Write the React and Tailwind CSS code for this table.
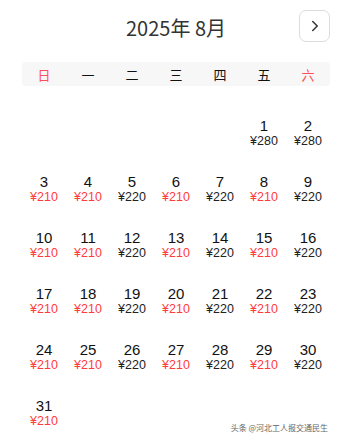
import { ChevronRight } from "lucide-react";

const weekDays = ["日", "一", "二", "三", "四", "五", "六"];

// price for each day of August 2025; red ones are discounted
const prices = {
  1: 280, 2: 280,
};
const redDays = [3, 4, 6, 8, 10, 11, 13, 15, 17, 18, 20, 22, 24, 25, 27, 29, 31];

function priceOf(day) {
  if (prices[day]) return prices[day];
  return redDays.includes(day) ? 210 : 220;
}

export default function App() {
  const cells = [];
  for (let i = 0; i < 5; i++) cells.push(null);
  for (let d = 1; d <= 31; d++) cells.push(d);

  return (
    <div
      className="w-[346px] h-[439px] bg-white pl-[22px] pr-[16px] pt-[10px] relative overflow-hidden"
      style={{ fontFamily: '"Noto Sans CJK SC", "Noto Sans", sans-serif' }}
    >
      <div className="grid grid-cols-[1fr_auto_1fr] items-center h-[32px]">
        <div />
        <div className="text-[20px] text-[#333] leading-none pt-[3px]">2025年 8月</div>
        <div className="flex justify-end">
          <button className="w-[31px] h-[32px] rounded-[7px] border border-[#dcdcdc] bg-white flex items-center justify-center text-[#333]">
            <ChevronRight size={18} strokeWidth={2} />
          </button>
        </div>
      </div>

      <div className="mt-[20px] h-[24px] rounded-[4px] bg-[#f7f7f7] grid grid-cols-7 items-center text-[13px] leading-none">
        {weekDays.map((w, i) => (
          <div
            key={w}
            className={`text-center ${i === 0 || i === 6 ? "text-[#ff4d5a]" : "text-[#111]"}`}
          >
            {w}
          </div>
        ))}
      </div>

      <div
        className="mt-[19px] grid grid-cols-7"
        style={{ fontFamily: '"Liberation Sans", Arial, sans-serif' }}
      >
        {cells.map((d, i) => (
          <div key={i} className="h-[56px] flex flex-col items-center justify-center">
            {d && (
              <>
                <div className="text-[15px] leading-[16px] text-[#111]">{d}</div>
                <div
                  className={`text-[12.5px] leading-[14px] ${
                    priceOf(d) === 210 ? "text-[#ff3b3b]" : "text-[#222]"
                  }`}
                >
                  ¥{priceOf(d)}
                </div>
              </>
            )}
          </div>
        ))}
      </div>

      <div className="absolute right-[18px] bottom-[7px] text-[8px] text-[#666] leading-none">
        头条 @河北工人报交通民生
      </div>
    </div>
  );
}
